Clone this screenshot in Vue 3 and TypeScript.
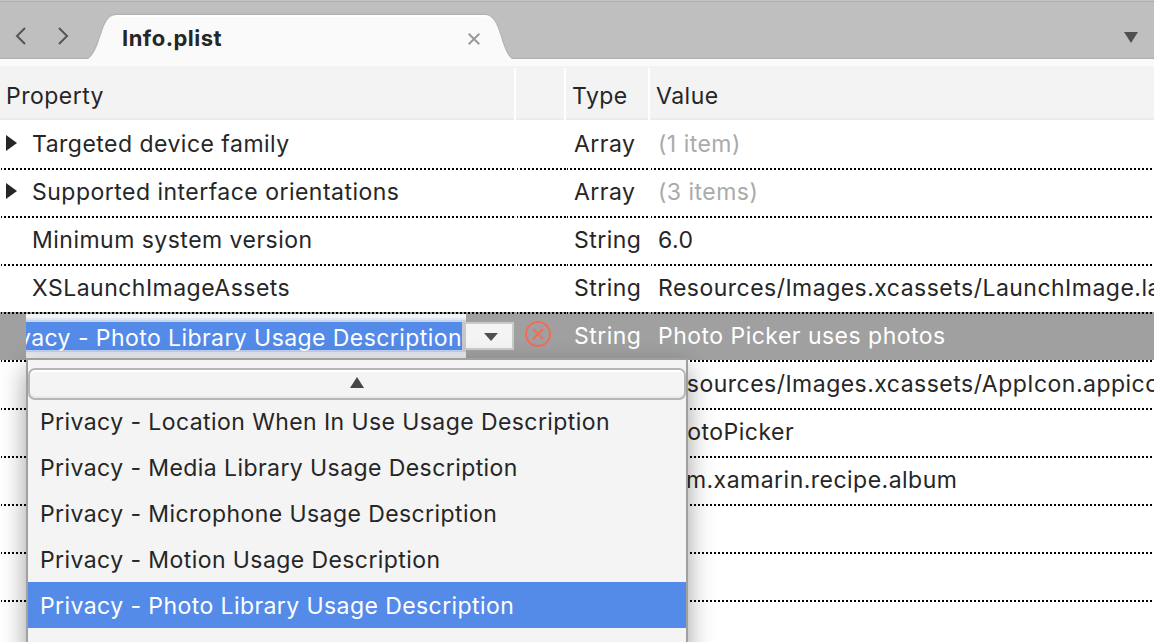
<script setup lang="ts">
interface Row {
  name: string
  type: string
  value: string
  expandable?: boolean
  muted?: boolean
  selected?: boolean
}

const rows: Row[] = [
  { name: 'Targeted device family', type: 'Array', value: '(1 item)', expandable: true, muted: true },
  { name: 'Supported interface orientations', type: 'Array', value: '(3 items)', expandable: true, muted: true },
  { name: 'Minimum system version', type: 'String', value: '6.0' },
  { name: 'XSLaunchImageAssets', type: 'String', value: 'Resources/Images.xcassets/LaunchImage.launchimage' },
  { name: '', type: 'String', value: 'Photo Picker uses photos', selected: true },
  { name: '', type: '', value: 'Resources/Images.xcassets/AppIcon.appiconset' },
  { name: '', type: '', value: 'PhotoPicker' },
  { name: '', type: '', value: 'com.xamarin.recipe.album' },
  { name: '', type: '', value: '' },
  { name: '', type: '', value: '' },
  { name: '', type: '', value: '' },
]

const options: string[] = [
  'Privacy - Location When In Use Usage Description',
  'Privacy - Media Library Usage Description',
  'Privacy - Microphone Usage Description',
  'Privacy - Motion Usage Description',
  'Privacy - Photo Library Usage Description',
]
const current = options[4]
</script>

<template>
  <div class="window">
    <header class="tabs">
      <svg class="tab-shape" width="1154" height="66" viewBox="0 0 1154 66">
        <path d="M0 58.5H88C101 50 100 15 116 14.500H485C501 15 500 50 512 58.500H1154" fill="none" stroke="#b1b1b1" stroke-width="1.500" />
        <path d="M0 59H88C102 50 100 15 116 15H485C501 15 500 50 512 59H1154V66H0Z" fill="#fafafa" />
        <path d="M116 16H485" stroke="#fff" stroke-width="2" />
      </svg>
      <svg class="chev back" width="12" height="18" viewBox="0 0 12 18"><path d="M10 1L2 9L10 17" /></svg>
      <svg class="chev next" width="12" height="18" viewBox="0 0 12 18"><path d="M2 1L10 9L2 17" /></svg>
      <span class="title">Info.plist</span>
      <svg class="close" width="12" height="12" viewBox="0 0 12 12"><path d="M.7.7L11.300 11.300M11.300.7L.7 11.300" /></svg>
      <svg class="more" width="14" height="11" viewBox="0 0 14 11"><path d="M0 0H14L7 11Z" /></svg>
    </header>
    <div class="head grid">
      <span class="h1">Property</span><span></span><span class="h3">Type</span><span class="h4">Value</span>
    </div>
    <div class="body">
      <div v-for="(row, i) in rows" :key="i" class="row grid" :class="{ selected: row.selected }">
        <div class="cell name">
          <svg v-if="row.expandable" class="arrow" width="11" height="16" viewBox="0 0 11 16"><path d="M0 0L11 8L0 16Z" /></svg>
          <span class="t">{{ row.name }}</span>
          <div v-if="row.selected" class="editor">
            <div class="field"><span class="t">{{ current }}</span></div>
            <div class="drop"><svg width="14" height="8" viewBox="0 0 14 8"><path d="M0 0H14L7 8Z" /></svg></div>
          </div>
        </div>
        <div class="cell action">
          <svg v-if="row.selected" class="remove" width="26" height="26" viewBox="0 0 26 26"><circle cx="13" cy="13" r="12" /><path d="M8 8L18 18M18 8L8 18" /></svg>
        </div>
        <div class="cell type"><span class="t">{{ row.type }}</span></div>
        <div class="cell value" :class="{ muted: row.muted }"><span class="t">{{ row.value }}</span></div>
      </div>
    </div>
    <div class="menu">
      <div class="scroll-up"><svg width="14" height="11" viewBox="0 0 14 11"><path d="M7 0L14 11H0Z" /></svg></div>
      <div v-for="(opt, i) in options" :key="opt" class="option" :class="{ active: i === 4 }"><span class="t">{{ opt }}</span></div>
    </div>
  </div>
</template>

<style>
html, body { margin: 0; overflow: hidden; }
</style>

<style scoped>
.window { position: relative; width: 1154px; height: 642px; overflow: hidden; background: #fff; color: #262626; font: 23px/48px Inter, "Liberation Sans", sans-serif; letter-spacing: .48px; white-space: nowrap; }
.window * { box-sizing: border-box; }
.tabs { position: relative; height: 66px; background: #bfbfbf; border-top: 1px solid #c4c4c4; }
.tabs::before { content: ""; position: absolute; left: 0; right: 0; top: 0; height: 1px; background: #adadad; }
.tab-shape { position: absolute; left: 0; top: -1px; }
.chev { position: absolute; top: 26px; fill: none; stroke: #555; stroke-width: 2; }
.back { left: 15px; }
.next { left: 57px; }
.title { position: absolute; left: 122px; top: 13px; font-weight: 700; font-size: 22px; letter-spacing: .5px; }
.close { position: absolute; left: 468px; top: 32px; stroke: #999; stroke-width: 2; }
.more { position: absolute; left: 1124px; top: 31px; fill: #505050; }
.grid { display: grid; grid-template-columns: 516px 50px 84px 1fr; }
.head { height: 54px; padding-top: 2px; background: #f3f3f3; border-bottom: 2px solid #ebebeb; }
.head > span { border-right: 2px solid #fff; line-height: 56px; }
.head > span:last-child { border: 0; }
.h1 { padding-left: 6px; }
.h3 { padding-left: 6px; }
.h4 { padding-left: 6px; }
.row { position: relative; height: 48px; }
.cell { position: relative; overflow: hidden; }
.row:not(:first-child) .cell::before { content: ""; position: absolute; left: 1px; right: 0; top: 0; height: 2px; background: linear-gradient(90deg, #000 50%, transparent 50%) -1px 0 / 4px 2px repeat-x; }
.name { padding-left: 32px; }
.type { padding-left: 8px; }
.value { padding-left: 8px; }
.muted { color: #aaa; }
.arrow { position: absolute; left: 6px; top: 15px; fill: #262626; }
.selected { background: #a0a0a0; color: #fff; }
.editor { position: absolute; left: 26px; top: 2px; width: 488px; height: 46px; display: flex; }
.field { position: relative; width: 440px; height: 46px; overflow: hidden; background: linear-gradient(#f3f5f3 0 4px, #dfe6f2 4px 6px, #c6d5f0 6px 8px, #c8c8c8 8px 36px, #c0d0f0 36px 38px, #dfe6f2 38px 40px, #ececec 40px); display: flex; justify-content: flex-end; padding-right: 4px; }
.field::before { content: ""; position: absolute; left: 0; right: 4px; top: 8px; height: 28px; background: #548be9; }
.field .t { position: relative; line-height: 48px; letter-spacing: .43px; }
.drop { margin-top: 8px; width: 48px; height: 28px; background: #f4f4f4; border: 2px solid #cbcbcb; border-left: 0; display: flex; align-items: center; justify-content: center; padding: 2px 0 0 4px; fill: #505050; }
.remove { position: absolute; left: 9px; top: 9px; fill: none; stroke: #f46c55; stroke-width: 2; }
.menu { position: absolute; left: 26px; top: 358px; width: 662px; height: 320px; border: 2px solid #a0a0a0; background: #f4f4f4; box-shadow: 0 10px 24px rgba(0,0,0,.38); padding-top: 8px; letter-spacing: .42px; }
.scroll-up { height: 32px; border: 2px solid #b6b6b6; border-radius: 7px; box-shadow: inset 0 2px #fff, inset 0 -2px #e9e9e9; display: flex; align-items: flex-start; justify-content: center; padding-top: 7px; fill: #464646; }
.option { height: 46px; line-height: 48px; padding-left: 12px; }
.scroll-up + .option { margin-top: -2px; }
.active { background: #548be9; color: #fff; }
</style>
